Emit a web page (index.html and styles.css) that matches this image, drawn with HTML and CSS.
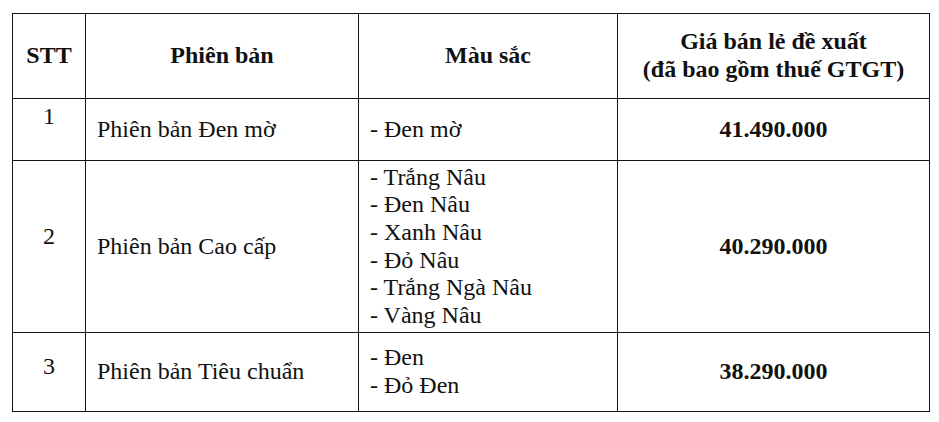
FILE: index.html
```html
<!DOCTYPE html>
<html lang="vi">
<head>
<meta charset="utf-8">
<title>Bảng giá</title>
<link rel="stylesheet" href="styles.css">
</head>
<body>
<table class="price-table">
  <colgroup>
    <col class="c-stt">
    <col class="c-ver">
    <col class="c-color">
    <col class="c-price">
  </colgroup>
  <thead>
    <tr class="r-head">
      <th>STT</th>
      <th>Phiên bản</th>
      <th>Màu sắc</th>
      <th>Giá bán lẻ đề xuất<br>(đã bao gồm thuế GTGT)</th>
    </tr>
  </thead>
  <tbody>
    <tr class="r-1">
      <td class="stt stt-top">1</td>
      <td class="ver">Phiên bản Đen mờ</td>
      <td class="color">- Đen mờ</td>
      <td class="price">41.490.000</td>
    </tr>
    <tr class="r-2">
      <td class="stt stt-2">2</td>
      <td class="ver">Phiên bản Cao cấp</td>
      <td class="color">- Trắng Nâu<br>- Đen Nâu<br>- Xanh Nâu<br>- Đỏ Nâu<br>- Trắng Ngà Nâu<br>- Vàng Nâu</td>
      <td class="price">40.290.000</td>
    </tr>
    <tr class="r-3">
      <td class="stt stt-3">3</td>
      <td class="ver">Phiên bản Tiêu chuẩn</td>
      <td class="color">- Đen<br>- Đỏ Đen</td>
      <td class="price">38.290.000</td>
    </tr>
  </tbody>
</table>
</body>
</html>
```
FILE: styles.css
```css
html, body {
  margin: 0;
  padding: 0;
  background: #ffffff;
}

body {
  font-family: "Liberation Serif", "Times New Roman", serif;
  font-size: 24px;
  color: #111111;
}

.price-table {
  border-collapse: collapse;
  table-layout: fixed;
  width: 917px;
  margin: 13px 0 0 12px;
  font-family: "Liberation Serif", "Times New Roman", serif;
}

.c-stt { width: 73px; }
.c-ver { width: 273px; }
.c-color { width: 259px; }
.c-price { width: 312px; }

.price-table th,
.price-table td {
  border: 1px solid #151515;
  padding: 0 11px;
  line-height: 27.6px;
  vertical-align: middle;
}

.price-table th {
  font-weight: bold;
  text-align: center;
}

.price-table .r-head th { height: 84px; }
.price-table .r-1 td { height: 61px; }
.price-table .r-2 td { height: 171px; }
.price-table .r-3 td { height: 78px; }

.price-table .stt {
  text-align: center;
  padding: 0;
}

.price-table .r-1 .stt-top {
  vertical-align: top;
  padding-top: 4px;
  height: 57px;
}

.price-table .r-2 .stt-2 {
  padding-bottom: 20px;
  height: 151px;
}

.price-table .r-3 .stt-3 {
  padding-bottom: 10px;
  height: 68px;
}

.price-table .ver,
.price-table .color {
  text-align: left;
}

.price-table .price {
  text-align: center;
  font-weight: bold;
}
```
